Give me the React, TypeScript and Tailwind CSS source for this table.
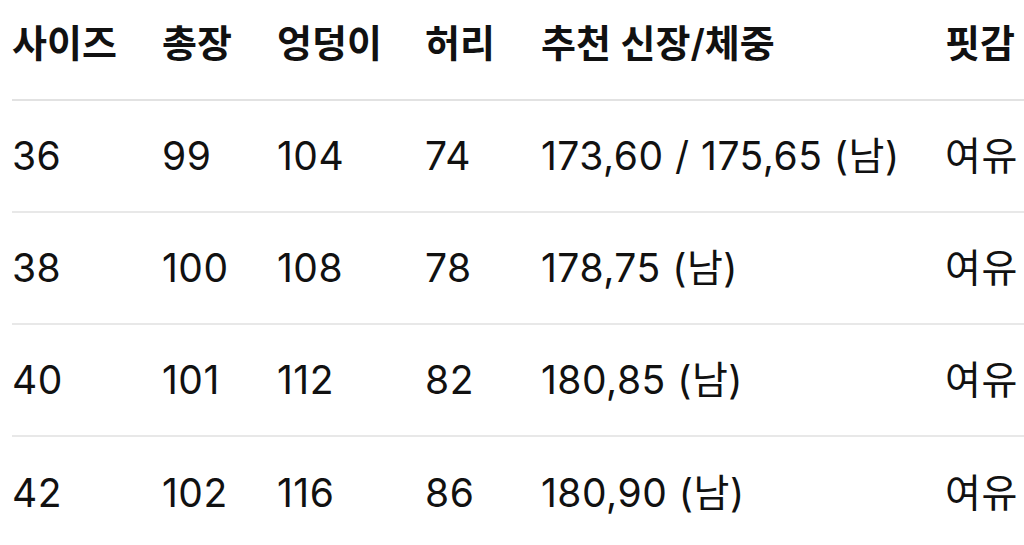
const headers = ['사이즈', '총장', '엉덩이', '허리', '추천 신장/체중', '핏감']

const rows = [
  ['36', '99', '104', '74', '173,60 / 175,65 (남)', '여유'],
  ['38', '100', '108', '78', '178,75 (남)', '여유'],
  ['40', '101', '112', '82', '180,85 (남)', '여유'],
  ['42', '102', '116', '86', '180,90 (남)', '여유'],
]

const cols = 'grid grid-cols-[150px_115px_148px_116px_404px_1fr]'

export default function App() {
  return (
    <div
      className="w-[1024px] h-[545px] overflow-hidden bg-white pl-[12px] text-[#111111]"
      style={{ fontFamily: '"Inter", "Noto Sans CJK KR", sans-serif' }}
    >
      <div className={`${cols} h-[101px] items-center pb-[12px] border-b-2 border-[#e2e2e2] text-[38px] font-semibold`}>
        {headers.map((h) => (
          <div key={h} className="whitespace-nowrap">{h}</div>
        ))}
      </div>
      {rows.map((r, i) => (
        <div
          key={r[0]}
          className={`${cols} h-[112px] items-center text-[39px] font-normal tracking-[0.5px] ${i < rows.length - 1 ? 'border-b-2 border-[#e8e8e8]' : ''}`}
        >
          {r.map((c, j) => (
            <div key={j} className="whitespace-nowrap">{c}</div>
          ))}
        </div>
      ))}
    </div>
  )
}
